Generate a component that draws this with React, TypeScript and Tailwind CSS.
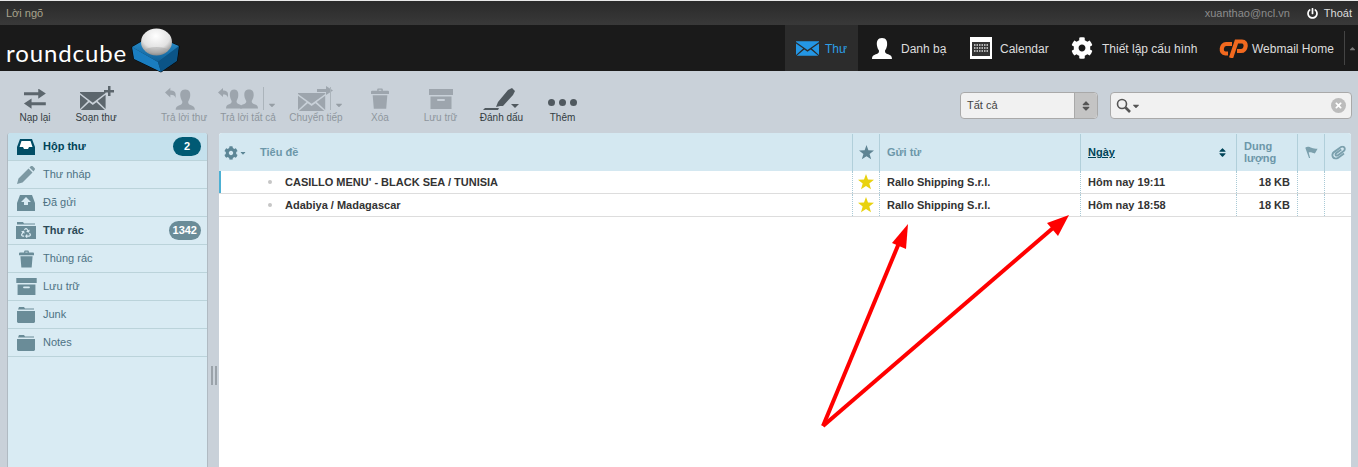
import React from "react"
import { FaCog, FaPaperclip, FaPowerOff, FaTimes, FaCaretDown, FaSort, FaCaretUp, FaRecycle } from "react-icons/fa"

const font = "font-['Liberation_Sans',Arial,sans-serif]"

const envelopePath = "M0 1 L16 12 L32 1 V0 H0 Z M0 3 V19 L10 10 Z M32 3 V19 L22 10 Z M1 20 H31 L20.5 11.5 L16 14.500 L11.500 11.500 Z"
const personPath = "M9 0 C13 0 14 3 13.600 6.500 C13.300 9 12.200 10.500 11.700 11.500 C11.700 13.500 12.500 14 14.500 14.800 C16.500 15.600 18 16.200 18 19 H0 C0 16.200 1.500 15.600 3.500 14.800 C5.500 14 6.300 13.500 6.300 11.500 C5.800 10.500 4.700 9 4.400 6.500 C4 3 5 0 9 0 Z"
const replyPath = "M0 5 L5 0.500 V3 C8 3 10 4 10 7 V10 C9 7.500 7.500 7 5 7 V9.500 Z"
const starPath = "M8 0 L10 5.600 L16 5.800 L11.300 9.500 L13 15.300 L8 11.900 L3 15.300 L4.700 9.500 L0 5.800 L6 5.600 Z"
const trashPath = "M5.500 2 V1 Q5.500 0 6.500 0 H9.500 Q10.500 0 10.500 1 V2 H15 Q16 2 16 3 V5 H0 V3 Q0 2 1 2 Z M6.800 1.200 V2 H9.200 V1.200 Z M1.500 6 H14.500 L13.500 18 H2.500 Z"
const folderPath = "M2 0 H7 L8 1.500 H17 V2.500 H1 Z M0 4 H18 V15 L17 16 H1 L0 15 Z"

const ArrowsIcon = () => (
    <svg viewBox="0 0 24 20" className="w-[24px] h-[20px]" fill="#5c666d">
        <path d="M0 4.500 H15 V0 L23 6 L15 12 V8 H0 Z" transform="translate(1 -0.500) scale(0.950 0.850)" />
        <path d="M24 4.500 H9 V0 L1 6 L9 12 V8 H24 Z" transform="translate(0 9.500) scale(0.950 0.850)" />
    </svg>
)

const ArchiveIcon = ({ className, color }: { className: string, color: string }) => (
    <svg viewBox="0 0 24 20" className={className} fill={color}>
        <path fillRule="evenodd" d="M0 0 H24 V6 H0 Z M1.500 7.500 H22.500 V20 H1.500 Z M9 10 Q8 10 8 11 Q8 12 9 12 H15 Q16 12 16 11 Q16 10 15 10 Z" />
    </svg>
)

const ToolButton = ({ label, disabled, width, children, caretLeft }: { label: string, disabled?: boolean, width: string, children: React.ReactNode, caretLeft?: string }) => (
    <div className={`${width} relative flex flex-col items-center ${disabled ? "opacity-40" : ""}`}>
        <div className="h-[27px] flex items-center justify-center">{children}</div>
        <span className="text-[10px] leading-[12px] text-[#333c42] whitespace-nowrap">{label}</span>
        {caretLeft && (
            <div className={`absolute ${caretLeft} top-[2px] h-[23px] border-l border-[#7f8990] pl-[3px] flex items-end`}>
                <FaCaretDown className="w-[10px] h-[10px] text-[#4c5358]" />
            </div>
        )}
    </div>
)

const Folder = ({ label, badge, bold, selected, badgeColor, icon }: { label: string, badge?: string, bold?: boolean, selected?: boolean, badgeColor?: string, icon: React.ReactNode }) => (
    <div className={`h-[28px] flex items-center border-b border-[#bbd3da] pl-[7px] pr-[6px] ${selected ? "bg-[#c5e1ed]" : ""}`}>
        <div className="w-[22px] h-[20px] flex items-center justify-center text-[#6a8c98] shrink-0">{icon}</div>
        <span className={`ml-[6px] flex-1 text-[11px] ${bold ? "font-bold text-[#2c4a57]" : "text-[#4d7283]"} ${selected ? "text-[#004458]" : ""}`}>{label}</span>
        {badge && (
            <span className={`h-[19px] rounded-full px-[4px] min-w-[28px] flex items-center justify-center text-white text-[11px] font-bold ${badgeColor}`}>{badge}</span>
        )}
    </div>
)

const Row = ({ subject, time, first }: { subject: string, time: string, first?: boolean }) => (
    <div className="flex h-[23px] items-center border-b border-[#dddddd] text-[11px] font-bold text-[#333333]">
        <div className={`w-[633px] h-full flex items-center ${first ? "border-l-[2px] border-[#4db0d3]" : "border-l-[2px] border-white"}`}>
            <span className="ml-[47px] w-[4px] h-[4px] rounded-full bg-[#c6c6c6]"></span>
            <span className="ml-[13px]">{subject}</span>
        </div>
        <div className="w-[27px] h-full flex items-center justify-center border-l border-dotted border-[#a9cad6]">
            <svg viewBox="0 0 16 16" className="w-[16px] h-[16px]" fill="#e9d20f"><path d={starPath} /></svg>
        </div>
        <div className="w-[201px] h-full flex items-center pl-[7px] border-l border-dotted border-[#a9cad6]">Rallo Shipping S.r.l.</div>
        <div className="w-[156px] h-full flex items-center pl-[7px] border-l border-dotted border-[#a9cad6]">{time}</div>
        <div className="w-[61px] h-full flex items-center justify-end pr-[7px] border-l border-dotted border-[#a9cad6]">18 KB</div>
        <div className="w-[27px] h-full border-l border-dotted border-[#a9cad6]"></div>
        <div className="w-[27px] h-full border-l border-dotted border-[#a9cad6]"></div>
    </div>
)

const App = () => {
    return (
        <div className={`${font} relative w-[1358px] h-[467px] overflow-hidden bg-[#c9d1d9] flex flex-col`}>
            {/* top line */}
            <div className="h-[25px] shrink-0 flex items-center justify-between border-t border-[#e8e8e8] bg-gradient-to-b from-[#2a2a2a] to-[#393939] pl-[6px] pr-[6px] text-[11px]">
                <span className="text-[#a8a38c]">Lời ngõ</span>
                <div className="flex items-center">
                    <span className="text-[#8c8c8c]">xuanthao@ncl.vn</span>
                    <FaPowerOff className="ml-[17px] w-[11px] h-[11px] text-white" />
                    <span className="ml-[6px] text-[#dddddd]">Thoát</span>
                </div>
            </div>

            {/* nav */}
            <div className="h-[46px] shrink-0 bg-[#1a1a1a] flex items-center">
                <div className="flex items-center pl-[6px] relative">
                    <span className="text-white text-[24px] leading-none tracking-[0.9px] pt-[9px] font-['Lato',sans-serif] font-normal">roundcube</span>
                    <svg viewBox="0 0 50 46" className="w-[50px] h-[46px] ml-[4px] mt-[3px] overflow-visible">
                        <defs>
                            <radialGradient id="ball" cx="48%" cy="28%" r="75%">
                                <stop offset="0%" stopColor="#ffffff" />
                                <stop offset="60%" stopColor="#e2e2e2" />
                                <stop offset="100%" stopColor="#7f7f7f" />
                            </radialGradient>
                            <linearGradient id="box" x1="0" y1="0" x2="0" y2="1">
                                <stop offset="0%" stopColor="#2f97d6" />
                                <stop offset="100%" stopColor="#0f5f96" />
                            </linearGradient>
                        </defs>
                        <path d="M1 20 L22 8 L48 19 L46 34 L30 45 L3 32 Z" fill="#0a3f63" stroke="#000000" strokeWidth="1" />
                        <path d="M1 20 L27 35 L30 45 L3 32 Z" fill="#1a7dc0" />
                        <path d="M27 35 L48 19 L46 34 L30 45 Z" fill="#0b5487" />
                        <path d="M1 20 L22 8 L48 19 L27 35 Z" fill="url(#box)" />
                        <ellipse cx="25.500" cy="15" rx="15.500" ry="13.500" fill="url(#ball)" />
                        <ellipse cx="25.500" cy="23" rx="11" ry="3" fill="#a8a8a8" opacity="0.500" />
                    </svg>
                </div>
                <div className="flex-1"></div>
                <div className="flex items-center h-full text-[12px] text-[#dddddd]">
                    <div className="w-[73px] h-full bg-[#2c2c2c] flex items-center pl-[11px] text-[#2d9fe8]">
                        <svg viewBox="0 0 32 20" className="w-[23px] h-[15px]" fill="#2496e4"><path d={envelopePath} /></svg>
                        <span className="ml-[6px] pt-[1px]">Thư</span>
                    </div>
                    <div className="w-[112px] h-full flex items-center pl-[14px]">
                        <svg viewBox="0 0 18 19" className="w-[20px] h-[21px]" fill="#ffffff"><path d={personPath} /></svg>
                        <span className="ml-[9px] pt-[1px]">Danh bạ</span>
                    </div>
                    <div className="w-[101px] h-full flex items-center">
                        <svg viewBox="0 0 22 22" className="w-[22px] h-[22px]">
                            <rect width="22" height="22" fill="#ffffff" />
                            <rect x="2" y="5" width="18" height="14" fill="#333333" />
                            <path d="M4 8h14M4 11h14M4 14h14" stroke="#dddddd" strokeWidth="1.500" strokeDasharray="1.500 1" />
                        </svg>
                        <span className="ml-[8px] pt-[1px]">Calendar</span>
                    </div>
                    <div className="w-[147px] h-full flex items-center">
                        <FaCog className="w-[22px] h-[22px] text-white" />
                        <span className="ml-[9px] pt-[1px]">Thiết lập cấu hình</span>
                    </div>
                    <div className="h-full flex items-center">
                        <svg viewBox="0 0 30 19" className="w-[30px] h-[19px]" fill="none" stroke="#f2691f" strokeWidth="4.200">
                            <path d="M14 5 H8 C3.500 5 1.500 14 7.500 14.500 H10" />
                            <path d="M13 19 L18.500 2.500 H24 C29.500 2.500 28.500 12 23 12 H19" />
                        </svg>
                        <span className="ml-[4px] w-[92px] pt-[1px]">Webmail Home</span>
                    </div>
                    <div className="w-[14px] h-[34px] border-l border-[#444444] flex items-center justify-end pr-[1px]">
                        <FaCaretUp className="w-[9px] h-[9px] text-[#777777]" />
                    </div>
                </div>
            </div>

            {/* toolbar */}
            <div className="h-[62px] shrink-0 flex items-start pt-[14px] pl-[5px]">
                <ToolButton label="Nạp lại" width="w-[60px]"><ArrowsIcon /></ToolButton>
                <ToolButton label="Soạn thư" width="w-[62px]">
                    <svg viewBox="0 0 34 25" className="w-[34px] h-[25px] ml-[2px]" fill="#5c666d">
                        <path d={envelopePath} transform="translate(0 6) scale(0.800 0.900)" />
                        <path d="M24 4 H28 V0 H30.500 V4 H34 V6.500 H30.500 V10 H28 V6.500 H24 Z" />
                    </svg>
                </ToolButton>
                <div className="w-[27px]"></div>
                <ToolButton label="Trả lời thư" width="w-[60px]" disabled>
                    <svg viewBox="0 0 30 22" className="w-[32px] h-[24px] mr-[6px]" fill="#5c666d">
                        <path d={replyPath} />
                        <path d={personPath} transform="translate(10 2)" />
                    </svg>
                </ToolButton>
                <ToolButton label="Trả lời tất cả" width="w-[68px]" disabled caretLeft="left-[49px]">
                    <svg viewBox="0 0 42 22" className="w-[42px] h-[23px] mr-[18px]" fill="#5c666d">
                        <path d={replyPath} />
                        <path d={personPath} transform="translate(8 2) scale(0.900 1)" />
                        <path d={personPath} transform="translate(22 2)" />
                    </svg>
                </ToolButton>
                <ToolButton label="Chuyển tiếp" width="w-[68px]" disabled caretLeft="left-[48px]">
                    <svg viewBox="0 0 35 25" className="w-[35px] h-[25px] mr-[2px]" fill="#5c666d">
                        <path d={envelopePath} transform="translate(0 7) scale(0.850 0.900)" />
                        <path d="M19 3 H28 V0 L35 4.500 L28 9 V6 H19 Z" />
                    </svg>
                </ToolButton>
                <ToolButton label="Xóa" width="w-[60px]" disabled>
                    <svg viewBox="0 0 16 18" className="w-[18px] h-[21px]" fill="#5c666d"><path fillRule="evenodd" d={trashPath} /></svg>
                </ToolButton>
                <ToolButton label="Lưu trữ" width="w-[61px]" disabled><ArchiveIcon className="w-[24px] h-[20px]" color="#5c666d" /></ToolButton>
                <ToolButton label="Đánh dấu" width="w-[61px]">
                    <svg viewBox="0 0 40 24" className="w-[40px] h-[24px]" fill="#50595f">
                        <path d="M1 23 H16 L17 21 H3 Z" />
                        <path d="M18 19 L14 20 L16 15 L26 3 L30 1 L33 4 L31 8 L21 19 Z" />
                        <path d="M29 17 H37 L33 21 Z" />
                    </svg>
                </ToolButton>
                <ToolButton label="Thêm" width="w-[61px]">
                    <div className="flex gap-[4px] mt-[8px]">
                        <span className="w-[7px] h-[7px] rounded-full bg-[#50595f]"></span>
                        <span className="w-[7px] h-[7px] rounded-full bg-[#50595f]"></span>
                        <span className="w-[7px] h-[7px] rounded-full bg-[#50595f]"></span>
                    </div>
                </ToolButton>
                <div className="flex-1"></div>
                <div className="mt-[7px] w-[138px] h-[27px] rounded-[4px] border border-[#a9a9a9] bg-[#f1f1f1] flex items-center text-[11px] text-[#444444]">
                    <span className="flex-1 pl-[6px]">Tất cả</span>
                    <div className="w-[23px] h-full rounded-r-[4px] border-l border-[#a9a9a9] bg-[#c4c4c4] flex items-center justify-center">
                        <FaSort className="w-[10px] h-[12px] text-[#555555]" />
                    </div>
                </div>
                <div className="mt-[7px] ml-[12px] mr-[6px] w-[242px] h-[27px] rounded-[4px] border border-[#a9a9a9] bg-[#f1f1f1] flex items-center pl-[5px] pr-[5px]">
                    <svg viewBox="0 0 15 15" className="w-[15px] h-[15px]" fill="none" stroke="#555555">
                        <circle cx="6" cy="6" r="4.500" strokeWidth="1.600" />
                        <path d="M9.500 9.500 L14 14" strokeWidth="2.600" />
                    </svg>
                    <FaCaretDown className="w-[10px] h-[10px] text-[#555555]" />
                    <div className="flex-1"></div>
                    <div className="w-[15px] h-[15px] rounded-full bg-[#bcbcbc] flex items-center justify-center">
                        <FaTimes className="w-[9px] h-[9px] text-white" />
                    </div>
                </div>
            </div>

            {/* main */}
            <div className="flex-1 flex pl-[7px] pr-[7px]">
                <div className="w-[201px] shrink-0 rounded-t-[3px] bg-[#d9ebf3] border-x border-[#b0bac2] overflow-hidden">
                    <Folder label="Hộp thư" bold selected badge="2" badgeColor="bg-[#005a74]" icon={
                        <svg viewBox="0 0 18 16" className="w-[18px] h-[16px]" fill="#004d66"><path d="M3 0 H15 L18 8 V16 H0 V8 Z" /><path d="M4.500 2 L2.500 8 H6 L7 10 H11 L12 8 H15.500 L13.500 2 Z" fill="#ffffff" /></svg>
                    } />
                    <Folder label="Thư nháp" icon={
                        <svg viewBox="0 0 18 18" className="w-[18px] h-[18px]" fill="#7d99a3"><path d="M0 18 L1.500 12.500 L11.500 2.500 L15.500 6.500 L5.500 16.500 Z M12.500 1.500 L14 0 Q15 -0.500 16 0.500 L17.500 2 Q18.500 3 17.500 4 L16.500 5.500 Z" /></svg>
                    } />
                    <Folder label="Đã gửi" icon={
                        <svg viewBox="0 0 18 16" className="w-[18px] h-[16px]" fill="#6a8c98"><path d="M3 0 H15 L18 8 V16 H0 V8 Z" /><path d="M9 2 L14 7 H11 V10 H7 V7 H4 Z" fill="#d9ebf3" /></svg>
                    } />
                    <Folder label="Thư rác" bold badge="1342" badgeColor="bg-[#6a8c98]" icon={
                        <svg viewBox="0 0 20 17" className="w-[20px] h-[17px]" fill="#6a8c98">
                            <path d="M1 0 H7 L8 1.500 H19 V2.500 H1 Z M0 4 H20 V17 H0 Z" />
                            <FaRecycle size={10} x={5} y={6} color="#d9ebf3" />
                        </svg>
                    } />
                    <Folder label="Thùng rác" icon={
                        <svg viewBox="0 0 16 18" className="w-[15px] h-[18px]" fill="#6a8c98"><path fillRule="evenodd" d={trashPath} /></svg>
                    } />
                    <Folder label="Lưu trữ" icon={<ArchiveIcon className="w-[21px] h-[17px]" color="#6a8c98" />} />
                    <Folder label="Junk" icon={<svg viewBox="0 0 18 16" className="w-[18px] h-[16px]" fill="#6a8c98"><path d={folderPath} /></svg>} />
                    <Folder label="Notes" icon={<svg viewBox="0 0 18 16" className="w-[18px] h-[16px]" fill="#6a8c98"><path d={folderPath} /></svg>} />
                </div>

                <div className="w-[11px] shrink-0 flex items-center justify-center gap-[2px]">
                    <div className="w-[2px] h-[19px] bg-[#9aa2a9] mt-[150px]"></div>
                    <div className="w-[2px] h-[19px] bg-[#9aa2a9] mt-[150px]"></div>
                </div>

                <div className="flex-1 bg-white rounded-t-[3px] overflow-hidden">
                    <div className="flex h-[38px] pt-[1px] bg-[#d4e8f1] text-[11px] text-[#6c97a9] font-bold">
                        <div className="w-[633px] flex items-center pl-[5px]">
                            <FaCog className="w-[14px] h-[14px] text-[#5c8696]" />
                            <FaCaretDown className="w-[8px] h-[8px] text-[#5c8696] ml-[1px]" />
                            <span className="ml-[13px]">Tiêu đề</span>
                        </div>
                        <div className="w-[27px] flex items-center justify-center border-l border-[#b1cfda]">
                            <svg viewBox="0 0 16 16" className="w-[15px] h-[15px]" fill="#5f8493"><path d={starPath} /></svg>
                        </div>
                        <div className="w-[201px] flex items-center pl-[7px] border-l border-[#b1cfda]">Gửi từ</div>
                        <div className="w-[156px] flex items-center pl-[7px] pr-[9px] border-l border-[#b1cfda] text-[#004458]">
                            <span className="flex-1 underline">Ngày</span>
                            <FaSort className="w-[9px] h-[11px] text-[#004458]" />
                        </div>
                        <div className="w-[61px] flex items-center pl-[7px] pb-[2px] leading-[12px] border-l border-[#b1cfda]">Dung lượng</div>
                        <div className="w-[27px] flex items-center justify-center border-l border-[#b1cfda]">
                            <svg viewBox="0 0 14 14" className="w-[13px] h-[13px]" fill="#7ba0ad"><path d="M0.500 1.500 C3 0 5 1 7 2 C9 3 11 3 13.500 3 C12.500 5 12 6 10.500 8 C8 7.500 6.500 6.500 4 7 L5.500 13 H4.300 L0.500 2.500 Z" /></svg>
                        </div>
                        <div className="w-[27px] flex items-center justify-center border-l border-[#b1cfda]">
                            <FaPaperclip className="w-[15px] h-[15px] text-[#7ba0ad] rotate-[10deg]" />
                        </div>
                    </div>
                    <Row first subject="CASILLO MENU' - BLACK SEA / TUNISIA" time="Hôm nay 19:11" />
                    <Row subject="Adabiya / Madagascar" time="Hôm nay 18:58" />
                </div>
            </div>

            {/* red arrows on top of the page */}
            <svg className="absolute inset-0 pointer-events-none" width="1358" height="467" viewBox="0 0 1358 467">
                <path d="M823 426 L899 243" stroke="#ff0000" strokeWidth="4" fill="none" />
                <path d="M823 426 L1053 228" stroke="#ff0000" strokeWidth="4" fill="none" />
                <path d="M908 224 L906 249 L892 243 Z" fill="#ff0000" />
                <path d="M1069 215 L1058 236 L1047 223 Z" fill="#ff0000" />
            </svg>
        </div>
    )
}

export default App
